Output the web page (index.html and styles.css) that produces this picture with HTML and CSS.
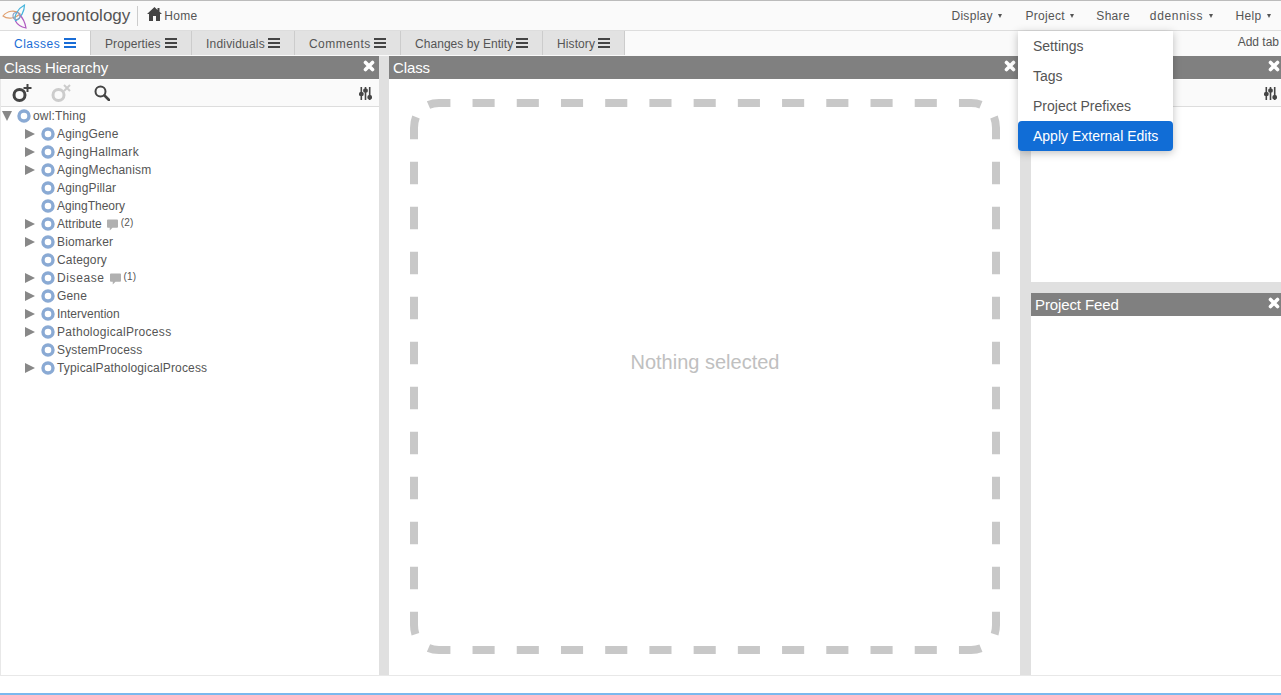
FILE: index.html
```html
<!DOCTYPE html>
<html lang="en">
<head>
<meta charset="utf-8">
<title>geroontology</title>
<link rel="stylesheet" href="styles.css">
</head>
<body>
<svg class="defs" aria-hidden="true">
  <symbol id="close" viewBox="0 0 12 12"><path d="M2.500 2.500 9.500 9.500M9.500 2.500 2.500 9.500" fill="none" stroke="#fff" stroke-width="3.600" stroke-linecap="round"/></symbol>
  <symbol id="sliders" viewBox="0 0 13 13"><g fill="#444"><rect x="1.500" y="0" width="1.600" height="13"/><rect x="5.700" y="0" width="1.600" height="13"/><rect x="9.900" y="0" width="1.600" height="13"/><rect x="0" y="5" width="4.600" height="4" rx="1.500"/><rect x="4.200" y="1.500" width="4.600" height="4" rx="1.500"/><rect x="8.400" y="8" width="4.600" height="4.500" rx="1.800"/></g></symbol>
  <symbol id="cls" viewBox="0 0 14 14"><circle cx="7" cy="7" r="5" fill="#fff" stroke="#8aaad4" stroke-width="3.400"/></symbol>
  <symbol id="note" viewBox="0 0 12 12"><path d="M1 0h10a1 1 0 0 1 1 1v7a1 1 0 0 1-1 1H6l-3 3V9H1a1 1 0 0 1-1-1V1a1 1 0 0 1 1-1Z" fill="#b0b0b0"/></symbol>
</svg>

<header class="topbar">
  <div class="brand">
    <svg class="logo" viewBox="0 0 26 26" aria-hidden="true">
      <path d="M1 13C5 8 13 6 18 11C14 15 6 17 1 13Z" fill="none" stroke="#e0a070" stroke-width="1.200"/>
      <path d="M22.500 2C22.500 8 19 15 13.500 18C11.500 13 16 5.500 22.500 2Z" fill="none" stroke="#45b4dc" stroke-width="1.200"/>
      <path d="M13.500 18C15 21 19 24 24 25C23 19 20 14 17 11" fill="none" stroke="#b05cc0" stroke-width="1.200"/>
      <circle cx="14.500" cy="13" r="3.500" fill="none" stroke="#8a9cc0" stroke-width="1.100"/>
    </svg>
    <span class="brand-name">geroontology</span>
    <span class="brand-sep"></span>
    <a class="home">
      <svg class="home-icon" viewBox="0 0 15 14" aria-hidden="true"><path d="M7.500 0 0 7h2v7h4V9h3v5h4V7h2l-2.500-2.300V1h-2v1.900Z" fill="#444"/></svg>
      <span class="home-label">Home</span>
    </a>
  </div>
  <nav class="mainnav">
    <a class="nav-item">Display<i class="caret"></i></a>
    <a class="nav-item">Project<i class="caret"></i></a>
    <a class="nav-item share">Share</a>
    <a class="nav-item user">ddenniss<i class="caret"></i></a>
    <a class="nav-item">Help<i class="caret"></i></a>
  </nav>
</header>

<div class="tabbar">
  <a class="tab active">Classes<i class="ham"></i></a>
  <a class="tab">Properties<i class="ham"></i></a>
  <a class="tab">Individuals<i class="ham"></i></a>
  <a class="tab">Comments<i class="ham"></i></a>
  <a class="tab">Changes by Entity<i class="ham"></i></a>
  <a class="tab">History<i class="ham"></i></a>
  <a class="add-tab">Add tab</a>
</div>

<main class="workspace">
  <section class="panel left">
    <div class="panel-head"><span>Class Hierarchy</span><svg class="x"><use href="#close"/></svg></div>
    <div class="toolbar">
      <svg class="tool" viewBox="0 0 20 20" aria-hidden="true"><circle cx="7.500" cy="12" r="5.500" fill="none" stroke="#444" stroke-width="3"/><path d="M15.500 1v8M11.500 5h8" stroke="#444" stroke-width="2"/></svg>
      <svg class="tool faded" viewBox="0 0 20 20" aria-hidden="true"><circle cx="7.500" cy="12" r="5.500" fill="none" stroke="#ccc" stroke-width="3"/><path d="m13 2 6 6m0-6-6 6" stroke="#ccc" stroke-width="2"/></svg>
      <svg class="tool search" viewBox="0 0 16 16" aria-hidden="true"><circle cx="6.500" cy="6.500" r="5" fill="none" stroke="#444" stroke-width="2"/><path d="m10.500 10.500 4.500 4.500" stroke="#444" stroke-width="2.600" stroke-linecap="round"/></svg>
      <svg class="sl"><use href="#sliders"/></svg>
    </div>
    <ul class="tree">
      <li class="row root"><i class="arrow down"></i><svg class="ci"><use href="#cls"/></svg>owl:Thing</li>
      <li class="row"><i class="arrow"></i><svg class="ci"><use href="#cls"/></svg>AgingGene</li>
      <li class="row loose"><i class="arrow"></i><svg class="ci"><use href="#cls"/></svg>AgingHallmark</li>
      <li class="row"><i class="arrow"></i><svg class="ci"><use href="#cls"/></svg>AgingMechanism</li>
      <li class="row"><i class="arrow none"></i><svg class="ci"><use href="#cls"/></svg>AgingPillar</li>
      <li class="row tight"><i class="arrow none"></i><svg class="ci"><use href="#cls"/></svg>AgingTheory</li>
      <li class="row tight"><i class="arrow"></i><svg class="ci"><use href="#cls"/></svg>Attribute<svg class="nt"><use href="#note"/></svg><span class="cnt">(2)</span></li>
      <li class="row"><i class="arrow"></i><svg class="ci"><use href="#cls"/></svg>Biomarker</li>
      <li class="row"><i class="arrow none"></i><svg class="ci"><use href="#cls"/></svg>Category</li>
      <li class="row wide"><i class="arrow"></i><svg class="ci"><use href="#cls"/></svg>Disease<svg class="nt"><use href="#note"/></svg><span class="cnt">(1)</span></li>
      <li class="row"><i class="arrow"></i><svg class="ci"><use href="#cls"/></svg>Gene</li>
      <li class="row tight"><i class="arrow"></i><svg class="ci"><use href="#cls"/></svg>Intervention</li>
      <li class="row loose"><i class="arrow"></i><svg class="ci"><use href="#cls"/></svg>PathologicalProcess</li>
      <li class="row"><i class="arrow none"></i><svg class="ci"><use href="#cls"/></svg>SystemProcess</li>
      <li class="row"><i class="arrow"></i><svg class="ci"><use href="#cls"/></svg>TypicalPathologicalProcess</li>
    </ul>
  </section>

  <section class="panel center">
    <div class="panel-head"><span>Class</span><svg class="x"><use href="#close"/></svg></div>
    <div class="empty">
      <svg class="dash" viewBox="0 0 590 555" aria-hidden="true">
        <path d="M18.500 6Q23 4 29 4H561Q567 4 571.500 6"/>
        <path d="M18.500 549Q23 551 29 551H561Q567 551 571.500 549"/>
        <path class="v" d="M6 18Q4 23 4 29V526Q4 532 6 537"/>
        <path class="v" d="M584 18Q586 23 586 29V526Q586 532 584 537"/>
      </svg>
      <p class="empty-text">Nothing selected</p>
    </div>
  </section>

  <div class="right">
    <section class="panel upper">
      <div class="panel-head"><span></span><svg class="x"><use href="#close"/></svg></div>
      <div class="toolbar end"><svg class="sl"><use href="#sliders"/></svg></div>
    </section>
    <section class="panel feed">
      <div class="panel-head"><span>Project Feed</span><svg class="x"><use href="#close"/></svg></div>
    </section>
  </div>
</main>

<ul class="dropdown">
  <li>Settings</li>
  <li>Tags</li>
  <li>Project Prefixes</li>
  <li class="selected">Apply External Edits</li>
</ul>

<footer class="footer"></footer>
</body>
</html>
```

FILE: styles.css
```css
* { box-sizing: border-box; }
html, body { margin: 0; height: 100%; }
body {
  position: relative;
  display: flex;
  flex-direction: column;
  height: 695px;
  overflow: hidden;
  background: #fff;
  color: #555;
  font: 12px/18px "Liberation Sans", Arial, sans-serif;
}
ul { margin: 0; padding: 0; list-style: none; }
.defs { position: absolute; width: 0; height: 0; }

.topbar {
  display: flex;
  justify-content: space-between;
  align-items: center;
  height: 31px;
  flex: none;
  background: #fafafa;
  border-top: 1px solid #bbb;
  border-bottom: 1px solid #ddd;
}
.brand { display: flex; align-items: center; padding-left: 2px; }
.logo { width: 26px; height: 26px; }
.brand-name { margin-left: 4px; font-size: 17px; color: #555; }
.brand-sep { width: 1px; height: 20px; margin: 0 9px 0 7px; background: #ccc; }
.home { display: flex; align-items: center; gap: 2px; }
.home-icon { width: 15px; height: 14px; margin-top: -3px; }
.home-label { padding-top: 1px; letter-spacing: .25px; }
.mainnav { display: flex; }
.nav-item { display: flex; align-items: center; padding: 1px 10px 0 13px; letter-spacing: .3px; }
.nav-item.share { padding-left: 12px; padding-right: 7px; }
.nav-item.user { letter-spacing: .65px; }
.caret {
  width: 0; height: 0;
  margin-left: 5.500px;
  border: 2.500px solid transparent;
  border-top: 4px solid #555;
  border-bottom: 0;
}

.tabbar {
  display: grid;
  grid-template-columns: 91px 101px 103px 106px 142px 82px 1fr;
  height: 25px;
  flex: none;
  background: #fafafa;
}
.tab {
  display: flex;
  align-items: center;
  height: 24px;
  padding: 1px 14px 0;
  background: #e2e2e2;
  border-right: 1px solid #ccc;
  letter-spacing: .1px;
}
.tab:nth-child(3) { letter-spacing: .2px; }
.tab:nth-child(4) { letter-spacing: .45px; }
.tab:nth-child(5) { letter-spacing: .05px; }
.tab.active { background: #fff; color: #1a6dd6; letter-spacing: .5px; }
.ham {
  width: 12px;
  height: 10px;
  margin-left: auto;
  margin-top: -1px;
  background: repeating-linear-gradient(#444 0 2px, transparent 2px 4px);
}
.tab.active .ham { background: repeating-linear-gradient(#1a6dd6 0 2px, transparent 2px 4px); }
.add-tab { justify-self: end; padding: 2px 2px 0 0; }

.workspace {
  display: flex;
  height: 620px;
  flex: none;
  gap: 10px;
  background: #e0e0e0;
  border-bottom: 1px solid #e8e8e8;
}
.panel { display: flex; flex-direction: column; background: #fff; }
.left { width: 379px; border-left: 1px solid #e8e8e8; }
.center { width: 631px; }
.right { display: flex; flex-direction: column; gap: 11px; flex: 1; margin-left: 1px; }
.upper { height: 226px; flex: none; }
.feed { flex: 1; }

.panel-head {
  display: flex;
  justify-content: space-between;
  height: 23px;
  flex: none;
  padding-left: 4px;
  background: #808080;
  color: #fff;
  font-size: 15px;
  line-height: 24px;
  letter-spacing: -.12px;
}
.left .panel-head { margin-left: -1px; }
.x { width: 12px; height: 12px; margin: 4px 1px 0 0; }
.left .x { margin-right: 4px; }
.center .x { margin-right: 4px; }

.toolbar {
  position: relative;
  display: flex;
  align-items: center;
  height: 27px;
  flex: none;
  margin-top: 1px;
  padding-left: 11px;
  background: #fafafa;
  border-bottom: 1px solid #ddd;
}
.toolbar.end { justify-content: flex-end; padding-right: 4px; }
.tool { width: 20px; height: 20px; margin-right: 19px; }
.tool.search { width: 16px; height: 16px; margin-left: 4px; margin-right: 0; }
.sl { width: 13px; height: 13px; margin-left: auto; margin-right: 7px; margin-top: 1px; }
.toolbar.end .sl { margin-right: 0; }

.row {
  display: flex;
  align-items: center;
  height: 18px;
  padding-left: 24px;
  white-space: nowrap;
  letter-spacing: .16px;
}
.row.root { padding-left: 0; }
.row.tight { letter-spacing: 0; }
.row.loose { letter-spacing: .3px; }
.row.wide { letter-spacing: .6px; }
.arrow {
  width: 0; height: 0;
  margin-left: 1px;
  border-style: solid;
  border-width: 5.500px 0 5.500px 10px;
  border-color: transparent transparent transparent #888;
}
.arrow.down { border-width: 10px 5.500px 0; border-color: #888 transparent transparent; }
.arrow.none { border-color: transparent; }
.ci { width: 14px; height: 14px; margin: 0 2px 0 5px; flex: none; }
.row:not(.root) .arrow { margin-left: 0; }
.row:not(.root) .ci { margin-left: 6px; }
.nt { width: 11px; height: 12px; margin-left: 5px; margin-top: 1px; }
.cnt { margin-left: 3px; font-size: 10px; line-height: 12px; margin-top: -2px; letter-spacing: .16px; }

.empty {
  display: grid;
  flex: 1;
  padding: 20px 21px 0;
  min-height: 0;
}
.dash, .empty-text { grid-area: 1 / 1; }
.dash { width: 590px; height: 555px; }
.dash path { fill: none; stroke: #c8c8c8; stroke-width: 8; stroke-dasharray: 22.100 22.120; }
.dash path.v { stroke-dasharray: 22.500 22.500; }
.empty-text {
  align-self: center;
  justify-self: center;
  margin: 0 0 50px;
  color: #c0c0c0;
  font-size: 20px;
  line-height: 24px;
}

.dropdown {
  position: absolute;
  top: 31px;
  left: 1018px;
  width: 155px;
  background: #fff;
  border-radius: 0 0 4px 4px;
  box-shadow: 0 2px 8px rgba(0, 0, 0, .25);
  font-size: 14px;
}
.dropdown li { height: 30px; padding-left: 15px; line-height: 30px; }
.dropdown .selected { background: #116dd6; color: #fff; border-radius: 4px; }

.footer { margin-top: auto; height: 2px; flex: none; background: #7ab8ee; }
```
